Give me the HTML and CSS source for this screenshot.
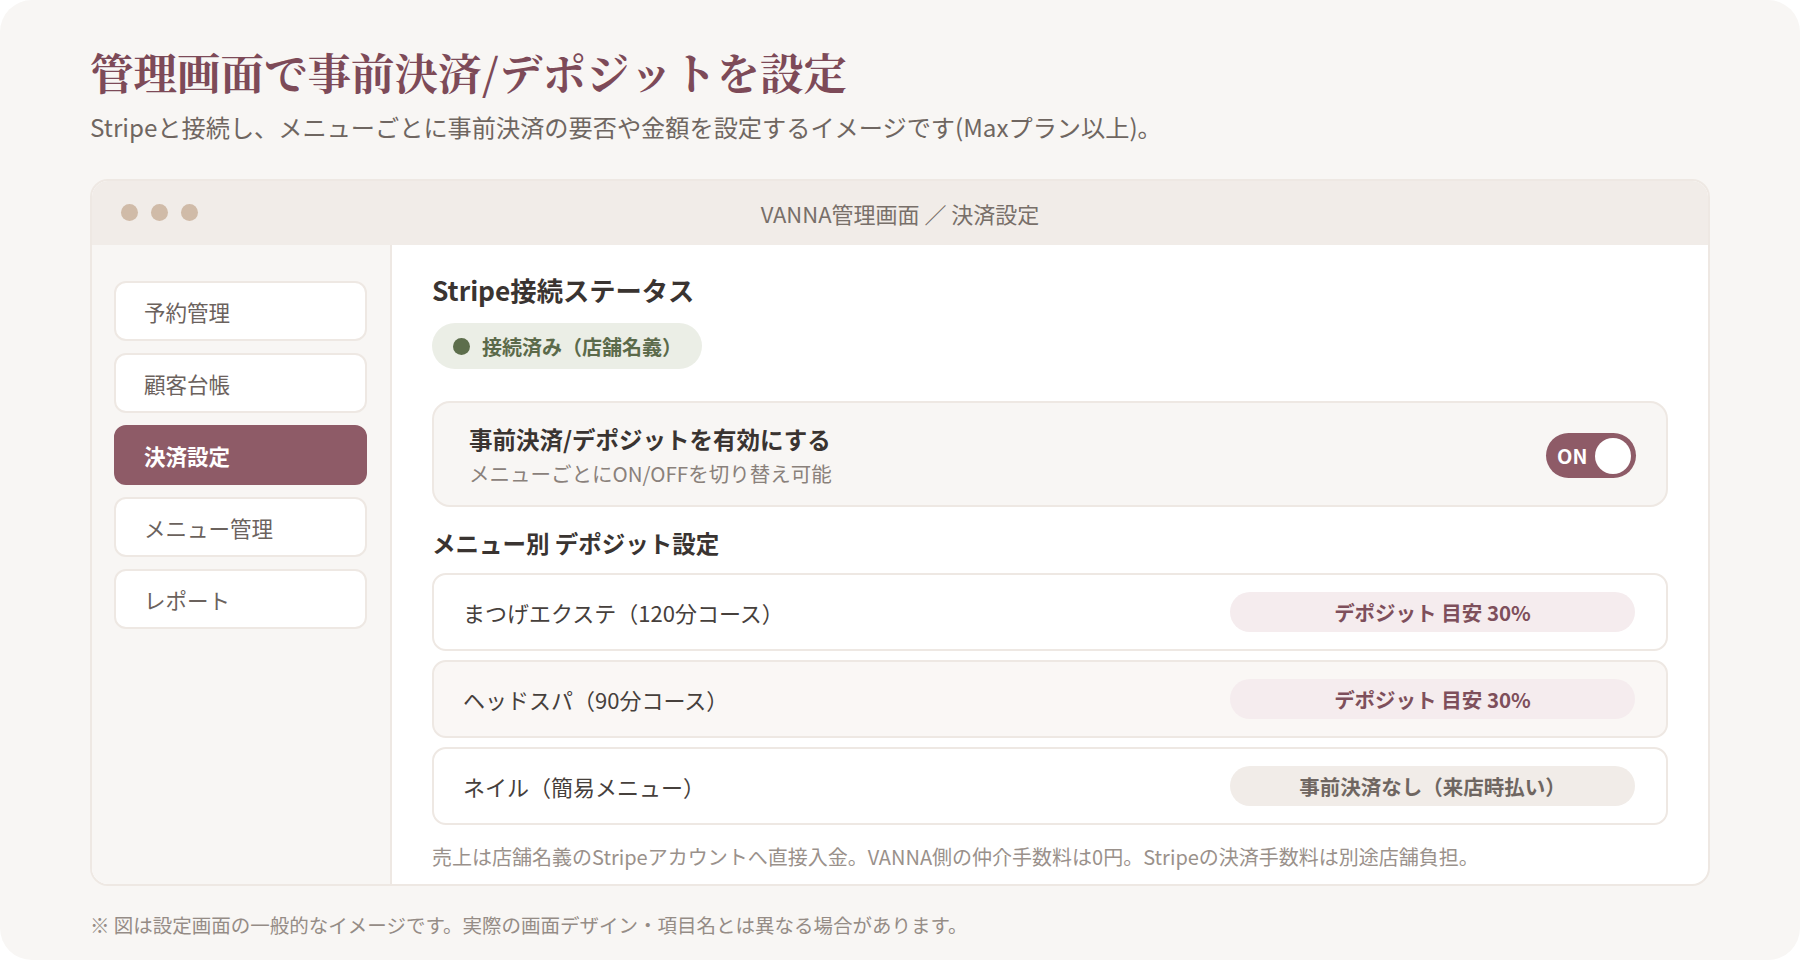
FILE: index.html
```html
<!DOCTYPE html>
<html lang="ja">
<head>
    <meta charset="UTF-8">
    <title>事前決済/デポジット設定</title>
    <link rel="stylesheet" href="styles.css">
</head>
<body>
    <div class="page">
        <h1 class="page-title">管理画面で事前決済/デポジットを設定</h1>
        <p class="lead">Stripeと接続し、メニューごとに事前決済の要否や金額を設定するイメージです(Maxプラン以上)。</p>

        <div class="window">
            <div class="titlebar">
                <div class="dots">
                    <span class="dot"></span>
                    <span class="dot"></span>
                    <span class="dot"></span>
                </div>
                <div class="titlebar-text">VANNA管理画面 ／ 決済設定</div>
            </div>

            <div class="window-body">
                <nav class="sidebar">
                    <div class="nav-item">予約管理</div>
                    <div class="nav-item">顧客台帳</div>
                    <div class="nav-item active">決済設定</div>
                    <div class="nav-item">メニュー管理</div>
                    <div class="nav-item">レポート</div>
                </nav>

                <main class="content">
                    <h2 class="section-title">Stripe接続ステータス</h2>
                    <div class="status-badge">
                        <span class="status-dot"></span>
                        接続済み（店舗名義）
                    </div>

                    <div class="toggle-card">
                        <div class="toggle-text">
                            <div class="toggle-title">事前決済/デポジットを有効にする</div>
                            <div class="toggle-sub">メニューごとにON/OFFを切り替え可能</div>
                        </div>
                        <div class="switch">
                            <span class="switch-label">ON</span>
                            <span class="switch-knob"></span>
                        </div>
                    </div>

                    <h2 class="section-title small">メニュー別 デポジット設定</h2>

                    <div class="menu-list">
                        <div class="menu-row">
                            <span class="menu-name">まつげエクステ（120分コース）</span>
                            <span class="pill">デポジット 目安 30%</span>
                        </div>
                        <div class="menu-row tinted">
                            <span class="menu-name">ヘッドスパ（90分コース）</span>
                            <span class="pill">デポジット 目安 30%</span>
                        </div>
                        <div class="menu-row">
                            <span class="menu-name">ネイル（簡易メニュー）</span>
                            <span class="pill muted">事前決済なし（来店時払い）</span>
                        </div>
                    </div>

                    <p class="note">売上は店舗名義のStripeアカウントへ直接入金。VANNA側の仲介手数料は0円。Stripeの決済手数料は別途店舗負担。</p>
                </main>
            </div>
        </div>

        <p class="footnote">※ 図は設定画面の一般的なイメージです。実際の画面デザイン・項目名とは異なる場合があります。</p>
    </div>
</body>
</html>
```

FILE: styles.css
```css
body {
    margin: 0;
    background: #ffffff;
    font-family: "Noto Sans CJK JP", "Noto Sans", sans-serif;
    color: #3f3936;
}

.page {
    width: 1800px;
    height: 960px;
    box-sizing: border-box;
    padding: 42px 90px 0 90px;
    background: #f8f6f4;
    border-radius: 32px;
    overflow: hidden;
}

.page-title {
    margin: 0;
    font-family: "Noto Serif CJK JP", "Noto Serif JP", "Liberation Serif", serif;
    font-size: 43.5px;
    line-height: 58px;
    font-weight: 700;
    color: #7d4a58;
}

.lead {
    margin: 11px 0 0;
    font-size: 24.2px;
    line-height: 32px;
    color: #6f6661;
}

/* Window */
.window {
    margin-top: 36px;
    background: #ffffff;
    border: 2px solid #eee8e3;
    border-radius: 18px;
    overflow: hidden;
}

.titlebar {
    position: relative;
    height: 64px;
    display: flex;
    align-items: center;
    justify-content: center;
    background: #f1ece8;
}

.dots {
    position: absolute;
    left: 29px;
    top: 23px;
    display: flex;
    gap: 13px;
}

.dot {
    width: 17px;
    height: 17px;
    border-radius: 50%;
    background: #d0bba8;
}

.titlebar-text {
    font-size: 22px;
    color: #786f69;
}

.window-body {
    display: flex;
}

.sidebar {
    width: 300px;
    flex-shrink: 0;
    box-sizing: border-box;
    padding: 36px 23px 0 22px;
    background: #f8f6f4;
    border-right: 2px solid #eee8e3;
    display: flex;
    flex-direction: column;
    gap: 12px;
}

.nav-item {
    height: 60px;
    box-sizing: border-box;
    display: flex;
    align-items: center;
    padding-left: 28px;
    background: #ffffff;
    border: 2px solid #eee8e3;
    border-radius: 12px;
    font-size: 21.5px;
    color: #6b625d;
}

.nav-item.active {
    background: #8e5b67;
    border-color: #8e5b67;
    color: #ffffff;
    font-weight: 700;
}

.content {
    flex: 1;
    padding: 26px 40px 13px 40px;
}

.section-title {
    margin: 0;
    font-size: 26.3px;
    line-height: 38px;
    font-weight: 700;
    color: #3a3431;
}

.section-title.small {
    margin-top: 18px;
    font-size: 23.5px;
    line-height: 36px;
}

.status-badge {
    margin-top: 14px;
    display: inline-flex;
    align-items: center;
    gap: 12px;
    height: 46px;
    padding: 0 20px 0 21px;
    background: #ebeee6;
    border-radius: 23px;
    font-size: 20px;
    font-weight: 700;
    color: #5b6a4a;
}

.status-dot {
    width: 17px;
    height: 17px;
    border-radius: 50%;
    background: #5d6e4c;
}

.toggle-card {
    margin-top: 32px;
    display: flex;
    align-items: center;
    justify-content: space-between;
    padding: 20px 30px 17px 35px;
    background: #f8f6f4;
    border: 2px solid #eee8e3;
    border-radius: 18px;
}

.toggle-title {
    font-size: 23.5px;
    line-height: 32px;
    font-weight: 700;
    color: #3a3431;
}

.toggle-sub {
    margin-top: 3px;
    font-size: 20.5px;
    line-height: 30px;
    color: #8a817b;
}

.switch {
    width: 90px;
    height: 45px;
    box-sizing: border-box;
    display: flex;
    align-items: center;
    justify-content: space-between;
    padding: 0 5px 0 11px;
    background: #8e5b67;
    border-radius: 23px;
}

.switch-label {
    font-size: 20px;
    font-weight: 700;
    color: #ffffff;
}

.switch-knob {
    width: 36px;
    height: 36px;
    border-radius: 50%;
    background: #ffffff;
}

.menu-list {
    margin-top: 12px;
    display: flex;
    flex-direction: column;
    gap: 9px;
}

.menu-row {
    height: 78px;
    box-sizing: border-box;
    display: flex;
    align-items: center;
    justify-content: space-between;
    padding: 0 31px 0 29px;
    background: #ffffff;
    border: 2px solid #eee8e3;
    border-radius: 14px;
}

.menu-row.tinted {
    background: #faf7f5;
}

.menu-name {
    font-size: 22px;
    color: #46403c;
}

.pill {
    width: 405px;
    height: 40px;
    display: flex;
    align-items: center;
    justify-content: center;
    background: #f5ecee;
    border-radius: 20px;
    font-size: 20.5px;
    font-weight: 700;
    color: #7e4f5b;
}

.pill.muted {
    background: #f1ece8;
    color: #6f6661;
}

.note {
    margin: 18px 0 0;
    font-size: 20px;
    line-height: 28px;
    color: #9a918b;
}

.footnote {
    margin: 25px 0 0;
    font-size: 19.5px;
    line-height: 28px;
    color: #958c86;
}
```
